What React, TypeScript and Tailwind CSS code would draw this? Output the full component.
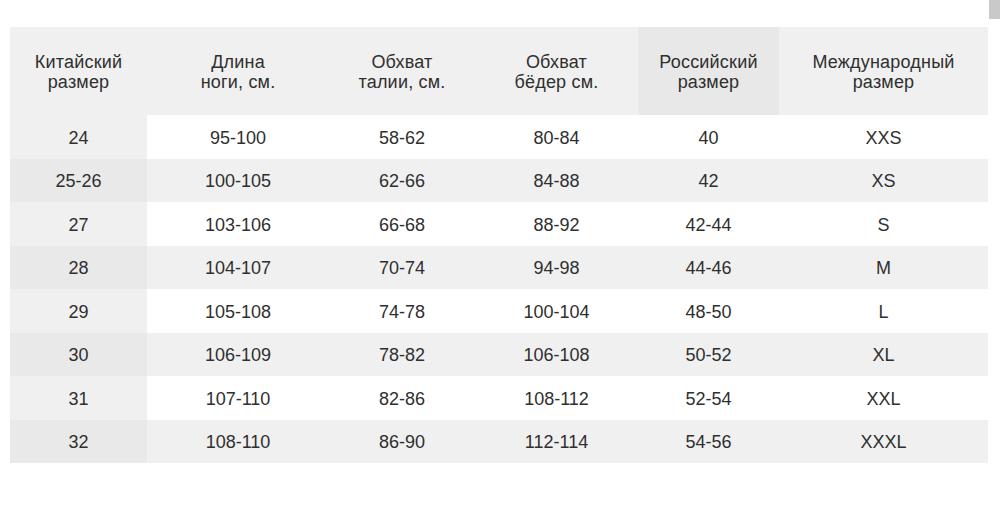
import React from "react";

const headers: [string, string][] = [
  ["Китайский", "размер"],
  ["Длина", "ноги, см."],
  ["Обхват", "талии, см."],
  ["Обхват", "бёдер см."],
  ["Российский", "размер"],
  ["Международный", "размер"],
];

const rows: string[][] = [
  ["24", "95-100", "58-62", "80-84", "40", "XXS"],
  ["25-26", "100-105", "62-66", "84-88", "42", "XS"],
  ["27", "103-106", "66-68", "88-92", "42-44", "S"],
  ["28", "104-107", "70-74", "94-98", "44-46", "M"],
  ["29", "105-108", "74-78", "100-104", "48-50", "L"],
  ["30", "106-109", "78-82", "106-108", "50-52", "XL"],
  ["31", "107-110", "82-86", "108-112", "52-54", "XXL"],
  ["32", "108-110", "86-90", "112-114", "54-56", "XXXL"],
];

export default function App() {
  return (
    <div
      className="relative w-[1000px] h-[530px] bg-white text-[#2f2f2f] text-[18px]"
      style={{ fontFamily: '"Liberation Sans", Arial, sans-serif' }}
    >
      <div className="absolute right-0 top-0 w-[11px] h-[19px] bg-[#c9c9c9]" />
      <div className="pt-[27px] pl-[10px]">
        <div className="grid w-[978px] grid-cols-[137px_182px_146px_163px_141px_209px]">
          {headers.map((h, i) => (
            <div
              key={i}
              className={`h-[88px] flex flex-col items-center justify-center leading-[20px] pt-[2px] tracking-[0.2px] ${
                i === 4 ? "bg-[#e8e8e8]" : "bg-[#f0f0f0]"
              }`}
            >
              <span>{h[0]}</span>
              <span>{h[1]}</span>
            </div>
          ))}
          {rows.map((r, ri) =>
            r.map((c, ci) => {
              const gray = ri % 2 === 1;
              const bg =
                ci === 0
                  ? gray
                    ? "bg-[#e9e9e9]"
                    : "bg-[#f0f0f0]"
                  : gray
                  ? "bg-[#f0f0f0]"
                  : "bg-white";
              return (
                <div
                  key={`${ri}-${ci}`}
                  className={`h-[43.5px] flex items-center justify-center pt-[3px] ${bg}`}
                >
                  {c}
                </div>
              );
            })
          )}
        </div>
      </div>
    </div>
  );
}
